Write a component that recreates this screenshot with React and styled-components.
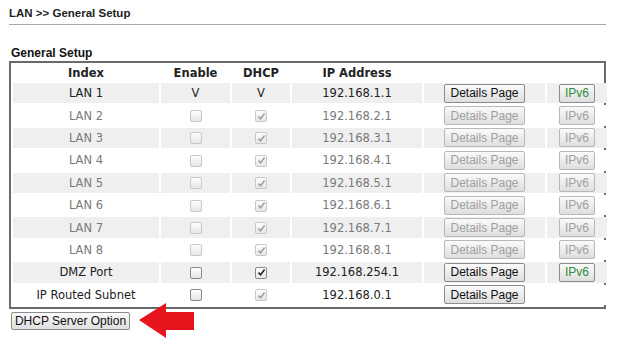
import React from "react"
import styled, { createGlobalStyle } from "styled-components"

const ROWS = [
  { name: "LAN 1", ip: "192.168.1.1", active: true, enable: "V", dhcp: "V", ipv6: true },
  { name: "LAN 2", ip: "192.168.2.1", ipv6: true },
  { name: "LAN 3", ip: "192.168.3.1", ipv6: true },
  { name: "LAN 4", ip: "192.168.4.1", ipv6: true },
  { name: "LAN 5", ip: "192.168.5.1", ipv6: true },
  { name: "LAN 6", ip: "192.168.6.1", ipv6: true },
  { name: "LAN 7", ip: "192.168.7.1", ipv6: true },
  { name: "LAN 8", ip: "192.168.8.1", ipv6: true },
  { name: "DMZ Port", ip: "192.168.254.1", active: true, enableBox: true, dhcpBox: true, ipv6: true },
  { name: "IP Routed Subnet", ip: "192.168.0.1", active: true, enableBox: true, dhcpBox: false, ipv6: false },
]

const GlobalStyle = createGlobalStyle`
  body {
    margin: 0;
    background: #fff;
    font-family: "DejaVu Sans", Verdana, sans-serif;
  }
`

export default function App() {
  return (
    <Page>
      <GlobalStyle />
      <Title>LAN &gt;&gt; General Setup</Title>
      <SectionTitle>General Setup</SectionTitle>
      <Frame>
        <Table>
          <colgroup>
            <col style={{ width: 146 }} />
            <col style={{ width: 69 }} />
            <col style={{ width: 58 }} />
            <col style={{ width: 130 }} />
            <col style={{ width: 121 }} />
            <col style={{ width: 60 }} />
          </colgroup>
          <thead>
            <tr>
              <Th>Index</Th>
              <Th>Enable</Th>
              <Th>DHCP</Th>
              <Th>IP Address</Th>
              <Th />
              <Th />
            </tr>
          </thead>
          <tbody>
            {ROWS.map((r, i) => {
              const shade = i % 2 === 0
              return (
                <tr key={r.name}>
                  <Td $shade={shade} $active={r.active}>{r.name}</Td>
                  <Td $shade={shade} $active={r.active}>
                    {r.enable ? r.enable : <Check $on={r.enableBox} />}
                  </Td>
                  <Td $shade={shade} $active={r.active}>
                    {r.dhcp ? r.dhcp : <Check checked $on={r.dhcpBox} />}
                  </Td>
                  <Td $shade={shade} $active={r.active}>{r.ip}</Td>
                  <Td $shade={shade}>
                    <SmallButton $active={r.active}>Details Page</SmallButton>
                  </Td>
                  <Td $shade={shade}>
                    {r.ipv6 && (
                      <SmallButton $active={r.active} $green={r.active}>IPv6</SmallButton>
                    )}
                  </Td>
                </tr>
              )
            })}
          </tbody>
        </Table>
      </Frame>
      <Footer>
        <OptionButton>DHCP Server Option</OptionButton>
        <Arrow width="56" height="36" viewBox="0 0 56 36">
          <polygon points="0,17 27,0 27,9 55,9 55,27 27,27 27,35" fill="#e5141d" />
        </Arrow>
      </Footer>
    </Page>
  )
}

function Check({ checked, $on }) {
  return (
    <Box $on={$on}>
      {checked && (
        <svg width="9" height="9" viewBox="0 0 9 9">
          <path d="M1.5 4.6 L3.6 6.8 L7.6 1.6" fill="none" stroke={$on ? "#222" : "#a0a0a0"} strokeWidth="1.6" />
        </svg>
      )}
    </Box>
  )
}

const Page = styled.div`
  width: 597px;
  padding: 7px 0 0 9px;
`

const Title = styled.div`
  font-family: "Liberation Sans", Arial, sans-serif;
  font-weight: bold;
  font-size: 11.5px;
  color: #222;
  padding-bottom: 5px;
  border-bottom: 1px solid #a8a8a8;
`

const SectionTitle = styled.div`
  font-family: "Liberation Sans", Arial, sans-serif;
  font-weight: bold;
  font-size: 12px;
  color: #111;
  margin: 21px 0 1px 2px;
`

const Frame = styled.div`
  border: 2px solid #6a6a6a;
  box-sizing: border-box;
  width: 597px;
`

const Table = styled.table`
  border-collapse: separate;
  border-spacing: 2px;
  table-layout: fixed;
  width: 100%;
`

const Th = styled.th`
  font-size: 11.5px;
  font-weight: bold;
  color: #222;
  height: 16px;
  line-height: 16px;
  padding: 0;
  text-align: center;
`

const Td = styled.td`
  height: 20.4px;
  padding: 0;
  text-align: center;
  vertical-align: middle;
  font-size: 11.5px;
  background: ${(p) => (p.$shade ? "#efefef" : "#fff")};
  color: ${(p) => (p.$active ? "#222" : "#7a7a7a")};
`

const Box = styled.span`
  display: inline-flex;
  align-items: center;
  justify-content: center;
  width: 10px;
  height: 10px;
  border: 1px solid ${(p) => (p.$on ? "#8a8a8a" : "#c8c8c8")};
  border-radius: 2px;
  background: linear-gradient(#fdfdfd, #e6e6e6);
  vertical-align: middle;
`

const SmallButton = styled.button`
  font-family: "Liberation Sans", Arial, sans-serif;
  font-size: 12px;
  height: 19px;
  padding: 0 5px;
  border: 1px solid ${(p) => (p.$active ? "#8c8c8c" : "#b8b8b8")};
  border-radius: 2px;
  background: linear-gradient(#fafafa, #dedede);
  color: ${(p) => (p.$green ? "#2e8b3a" : p.$active ? "#111" : "#a0a0a0")};
  vertical-align: middle;
`

const Footer = styled.div`
  display: flex;
  align-items: center;
  margin: -6px 0 0 2px;
`

const OptionButton = styled.button`
  font-family: "Liberation Sans", Arial, sans-serif;
  font-size: 12px;
  height: 18px;
  width: 119px;
  padding: 0;
  border: 1px solid #8c8c8c;
  border-radius: 2px;
  background: linear-gradient(#fafafa, #dedede);
  color: #111;
`

const Arrow = styled.svg`
  margin-left: 9px;
  display: block;
`
